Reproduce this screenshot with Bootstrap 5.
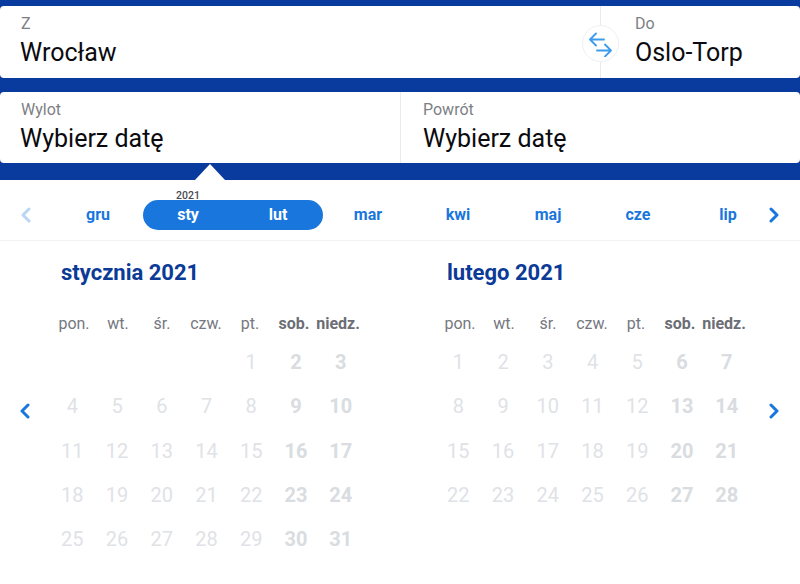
<!DOCTYPE html>
<html lang="pl">
<head>
<meta charset="utf-8">
<title>Kalendarz</title>
<link rel="stylesheet" href="https://cdn.jsdelivr.net/npm/bootstrap@5.3.0/dist/css/bootstrap.min.css">
<style>
html,body{height:584px;overflow:hidden}
body{font-family:Roboto,"Liberation Sans",sans-serif;background:#fff;color:#000}
.searchbar{background:#093a9d;padding:6px 0 17px;position:relative}
.fieldrow{background:#fff;border-radius:4px;height:72px}
.fieldrow+.fieldrow{margin-top:14px;height:71px}
.fld{padding:8px 20px 0 21px;position:relative}
.fld-from{width:600px}
.fld-to{width:200px;border-left:1px solid #e9ecef;padding-left:34px}
.fld-half{width:400px}
.fld-half+.fld-half{border-left:1px solid #e9ecef;padding-left:22px}
.fld-lbl{font-size:16px;line-height:20px;color:#7d7f85}
.fld-val{font-size:25px;line-height:34px;margin-top:2px;color:#0b0b0f}
.fld-val-shift{margin-left:-1px}
.swapbtn{position:absolute;left:-19px;top:19px;width:37px;height:37px;border-radius:50%;background:#fff;border:1px solid #eef0f2;display:flex;align-items:center;justify-content:center}
.pointer{position:absolute;left:195px;bottom:0;width:0;height:0;border-left:15px solid transparent;border-right:15px solid transparent;border-bottom:16px solid #fff}
.monthstrip{height:61px;border-bottom:1px solid #f1f2f4;padding-top:20px;align-items:flex-start}
.arrowcell{width:53px;height:30px;display:flex;align-items:center;justify-content:center;flex:none;padding-right:2px}
.arrowcell-end{width:27px;margin-left:-5px;justify-content:flex-start;padding-right:0}
.mth{width:90px;height:30px;line-height:30px;text-align:center;font-size:16px;font-weight:700;color:#1976dc;position:relative;flex:none}
.mthpill{background:#1976dc;border-radius:15px;display:flex;height:30px}
.mthpill .mth{color:#fff}
.yearlbl{position:absolute;left:0;right:0;top:-10px;height:12px;line-height:12px;font-size:10.5px;font-weight:500;color:#4a4a4f;text-align:center}
.calarea{padding-top:16px}
.sidearrow{width:50px;flex:none;display:flex;justify-content:center;align-items:flex-start;padding-top:146px}
.sidearrow-end{width:49px}
.calmonth{width:313px;flex:none}
.calmonth+.calmonth{margin-left:73px}
.caltitle{font-size:22px;line-height:32px;font-weight:700;color:#0b3a97;padding-left:11px;margin:0}
.daygrid{display:grid;grid-template-columns:repeat(7,44.72px);grid-auto-rows:44.3px}
.wkdrow{grid-template-columns:repeat(7,44px);grid-auto-rows:32px;margin-top:19px;padding-left:2px}
.wkd{line-height:32px;text-align:center;font-size:16px;color:#75787f;white-space:nowrap}
.wkd-we{font-weight:700;color:#6b6e75}
.dy{line-height:44px;text-align:center;font-size:20px;color:#dfe2e6}
.dy-we{font-weight:700;color:#d9dce0}
</style>
</head>
<body>
<div class="searchbar">
  <div class="fieldrow d-flex">
    <div class="fld fld-from"><div class="fld-lbl">Z</div><div class="fld-val fld-val-shift">Wrocław</div></div>
    <div class="fld fld-to">
      <div class="swapbtn"><svg width="24" height="26" viewBox="0 0 24 26" fill="none" stroke="#3c9cec" stroke-width="1.8" stroke-linecap="round" stroke-linejoin="round"><path d="M15 8.5H1M7 2.5l-6 6 6 6"/><path d="M8 19.5H22M16 13.5l6 6-6 6"/></svg></div>
      <div class="fld-lbl">Do</div><div class="fld-val">Oslo-Torp</div>
    </div>
  </div>
  <div class="fieldrow d-flex">
    <div class="fld fld-half"><div class="fld-lbl">Wylot</div><div class="fld-val fld-val-shift">Wybierz datę</div></div>
    <div class="fld fld-half"><div class="fld-lbl">Powrót</div><div class="fld-val">Wybierz datę</div></div>
  </div>
  <div class="pointer"></div>
</div>
<div class="monthstrip d-flex">
  <div class="arrowcell"><svg width="12" height="16" viewBox="0 0 12 16" fill="none" stroke="#b9d6f5" stroke-width="3" stroke-linecap="round" stroke-linejoin="round"><path d="M9 2 3 8l6 6"/></svg></div>
  <div class="mth">gru</div>
  <div class="mthpill">
    <div class="mth"><span class="yearlbl">2021</span>sty</div>
    <div class="mth">lut</div>
  </div>
  <div class="mth">mar</div>
  <div class="mth">kwi</div>
  <div class="mth">maj</div>
  <div class="mth">cze</div>
  <div class="mth">lip</div>
  <div class="arrowcell arrowcell-end"><svg width="12" height="16" viewBox="0 0 12 16" fill="none" stroke="#1976dc" stroke-width="3" stroke-linecap="round" stroke-linejoin="round"><path d="M3 2l6 6-6 6"/></svg></div>
</div>
<div class="calarea d-flex">
  <div class="sidearrow"><svg width="12" height="16" viewBox="0 0 12 16" fill="none" stroke="#1976dc" stroke-width="3" stroke-linecap="round" stroke-linejoin="round"><path d="M9 2 3 8l6 6"/></svg></div>
  <div class="calmonth">
    <h2 class="caltitle">stycznia 2021</h2>
    <div class="daygrid wkdrow">
      <div class="wkd">pon.</div><div class="wkd">wt.</div><div class="wkd">śr.</div><div class="wkd">czw.</div><div class="wkd">pt.</div><div class="wkd wkd-we">sob.</div><div class="wkd wkd-we">niedz.</div>
    </div>
    <div class="daygrid">
      <div></div><div></div><div></div><div></div><div class="dy">1</div><div class="dy dy-we">2</div><div class="dy dy-we">3</div>
      <div class="dy">4</div><div class="dy">5</div><div class="dy">6</div><div class="dy">7</div><div class="dy">8</div><div class="dy dy-we">9</div><div class="dy dy-we">10</div>
      <div class="dy">11</div><div class="dy">12</div><div class="dy">13</div><div class="dy">14</div><div class="dy">15</div><div class="dy dy-we">16</div><div class="dy dy-we">17</div>
      <div class="dy">18</div><div class="dy">19</div><div class="dy">20</div><div class="dy">21</div><div class="dy">22</div><div class="dy dy-we">23</div><div class="dy dy-we">24</div>
      <div class="dy">25</div><div class="dy">26</div><div class="dy">27</div><div class="dy">28</div><div class="dy">29</div><div class="dy dy-we">30</div><div class="dy dy-we">31</div>
    </div>
  </div>
  <div class="calmonth">
    <h2 class="caltitle">lutego 2021</h2>
    <div class="daygrid wkdrow">
      <div class="wkd">pon.</div><div class="wkd">wt.</div><div class="wkd">śr.</div><div class="wkd">czw.</div><div class="wkd">pt.</div><div class="wkd wkd-we">sob.</div><div class="wkd wkd-we">niedz.</div>
    </div>
    <div class="daygrid">
      <div class="dy">1</div><div class="dy">2</div><div class="dy">3</div><div class="dy">4</div><div class="dy">5</div><div class="dy dy-we">6</div><div class="dy dy-we">7</div>
      <div class="dy">8</div><div class="dy">9</div><div class="dy">10</div><div class="dy">11</div><div class="dy">12</div><div class="dy dy-we">13</div><div class="dy dy-we">14</div>
      <div class="dy">15</div><div class="dy">16</div><div class="dy">17</div><div class="dy">18</div><div class="dy">19</div><div class="dy dy-we">20</div><div class="dy dy-we">21</div>
      <div class="dy">22</div><div class="dy">23</div><div class="dy">24</div><div class="dy">25</div><div class="dy">26</div><div class="dy dy-we">27</div><div class="dy dy-we">28</div>
    </div>
  </div>
  <div class="sidearrow sidearrow-end"><svg width="12" height="16" viewBox="0 0 12 16" fill="none" stroke="#1976dc" stroke-width="3" stroke-linecap="round" stroke-linejoin="round"><path d="M3 2l6 6-6 6"/></svg></div>
</div>
<script src="https://cdn.jsdelivr.net/npm/bootstrap@5.3.0/dist/js/bootstrap.bundle.min.js"></script>
</body>
</html>
